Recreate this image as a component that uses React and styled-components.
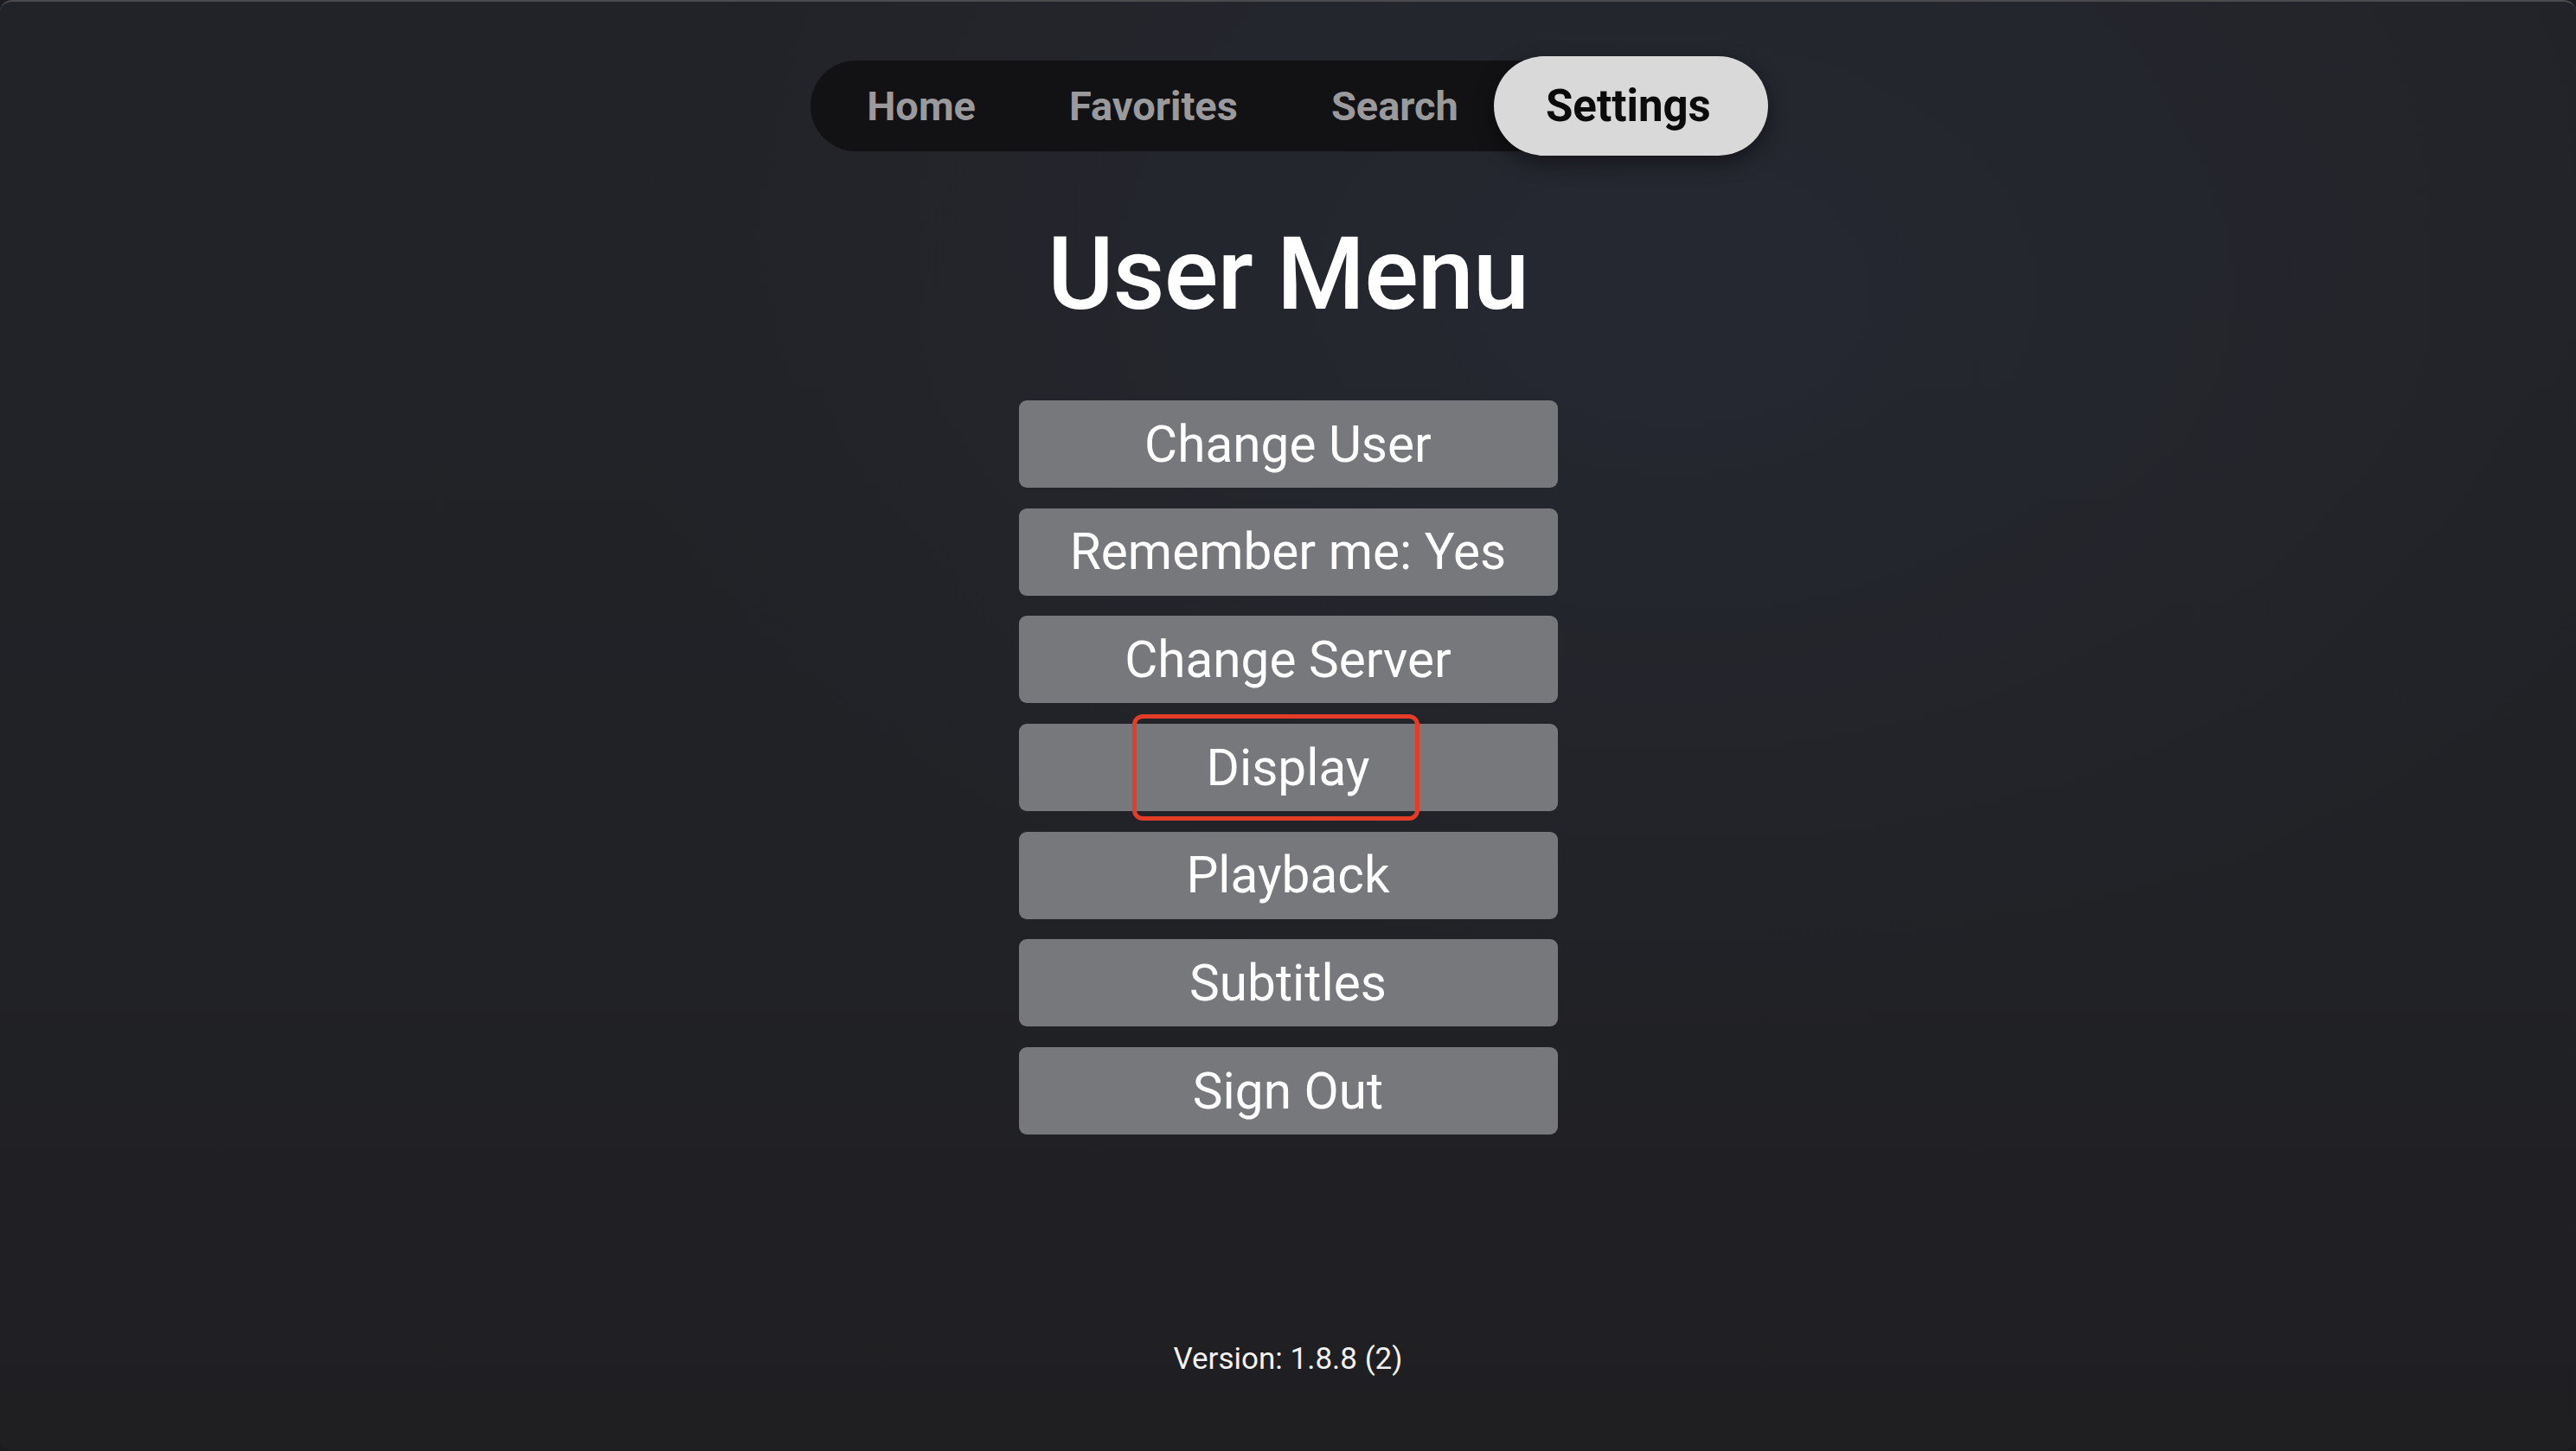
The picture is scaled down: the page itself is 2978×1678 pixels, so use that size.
import React from "react";
import styled, { createGlobalStyle } from "styled-components";

const GlobalStyle = createGlobalStyle`
  html, body {
    margin: 0;
    padding: 0;
    background: #1c1c1f;
  }
  body {
    font-family: Roboto, "Liberation Sans", Arial, sans-serif;
    -webkit-font-smoothing: antialiased;
  }
`;

const tabs = ["Home", "Favorites", "Search", "Settings"];
const items = [
  "Change User",
  "Remember me: Yes",
  "Change Server",
  "Display",
  "Playback",
  "Subtitles",
  "Sign Out",
];

const App = () => {
  return (
    <>
      <GlobalStyle />
      <Screen>
        <TabBar>
          {tabs.map((t) => (
            <Tab key={t} active={t === "Settings"}>
              {t}
            </Tab>
          ))}
        </TabBar>
        <Title>User Menu</Title>
        <Menu>
          {items.map((label) => (
            <MenuButton key={label}>
              {label}
              {label === "Display" && <Highlight />}
            </MenuButton>
          ))}
        </Menu>
        <Version>Version: 1.8.8 (2)</Version>
      </Screen>
    </>
  );
};

export default App;

const Screen = styled.div`
  height: 1678px;
  box-sizing: border-box;
  display: flex;
  flex-direction: column;
  align-items: center;
  padding-top: 68px;
  border-radius: 14px;
  border-top: 2px solid #4a4b4f;
  background: radial-gradient(
      ellipse at 65% 20%,
      rgba(40, 44, 56, 0.6) 0%,
      rgba(33, 34, 39, 0) 45%
    ),
    linear-gradient(180deg, #222328 0%, #212226 60%, #1f1f22 100%);
  overflow: hidden;
`;

const TabBar = styled.div`
  display: flex;
  align-items: center;
  height: 105px;
  padding-left: 11px;
  background: #121215;
  border-radius: 53px;
  margin-left: 3px;
`;

const Tab = styled.div`
  display: flex;
  align-items: center;
  font-weight: 700;
  font-size: ${(p) => (p.active ? "51px" : "47px")};
  color: ${(p) => (p.active ? "#0b0b0c" : "#9a9a9c")};
  padding: ${(p) => (p.active ? "0 66px 0 60px" : "0 54px")};
  height: ${(p) => (p.active ? "115px" : "105px")};
  margin-left: ${(p) => (p.active ? "-13px" : "0")};
  background: ${(p) => (p.active ? "#d9d9da" : "transparent")};
  border-radius: 58px;
  box-shadow: ${(p) => (p.active ? "0 8px 24px rgba(0,0,0,0.45)" : "none")};
`;

const Title = styled.h1`
  margin: 67px 0 0;
  font-size: 117px;
  line-height: 150px;
  font-weight: 500;
  color: #ffffff;
  letter-spacing: -1px;
`;

const Menu = styled.div`
  display: flex;
  flex-direction: column;
  gap: 23.7px;
  margin-top: 71px;
`;

const MenuButton = styled.div`
  position: relative;
  width: 623px;
  height: 101px;
  display: flex;
  align-items: center;
  justify-content: center;
  background: #77787b;
  border-radius: 9px;
  color: #ffffff;
  font-size: 58.5px;
  font-weight: 400;
`;

const Highlight = styled.div`
  position: absolute;
  left: 131px;
  top: -11px;
  width: 332px;
  height: 123px;
  box-sizing: border-box;
  border: 5px solid #e33d27;
  border-radius: 12px;
`;

const Version = styled.div`
  margin-top: auto;
  margin-bottom: 86px;
  font-size: 35px;
  color: #f2f2f2;
`;
